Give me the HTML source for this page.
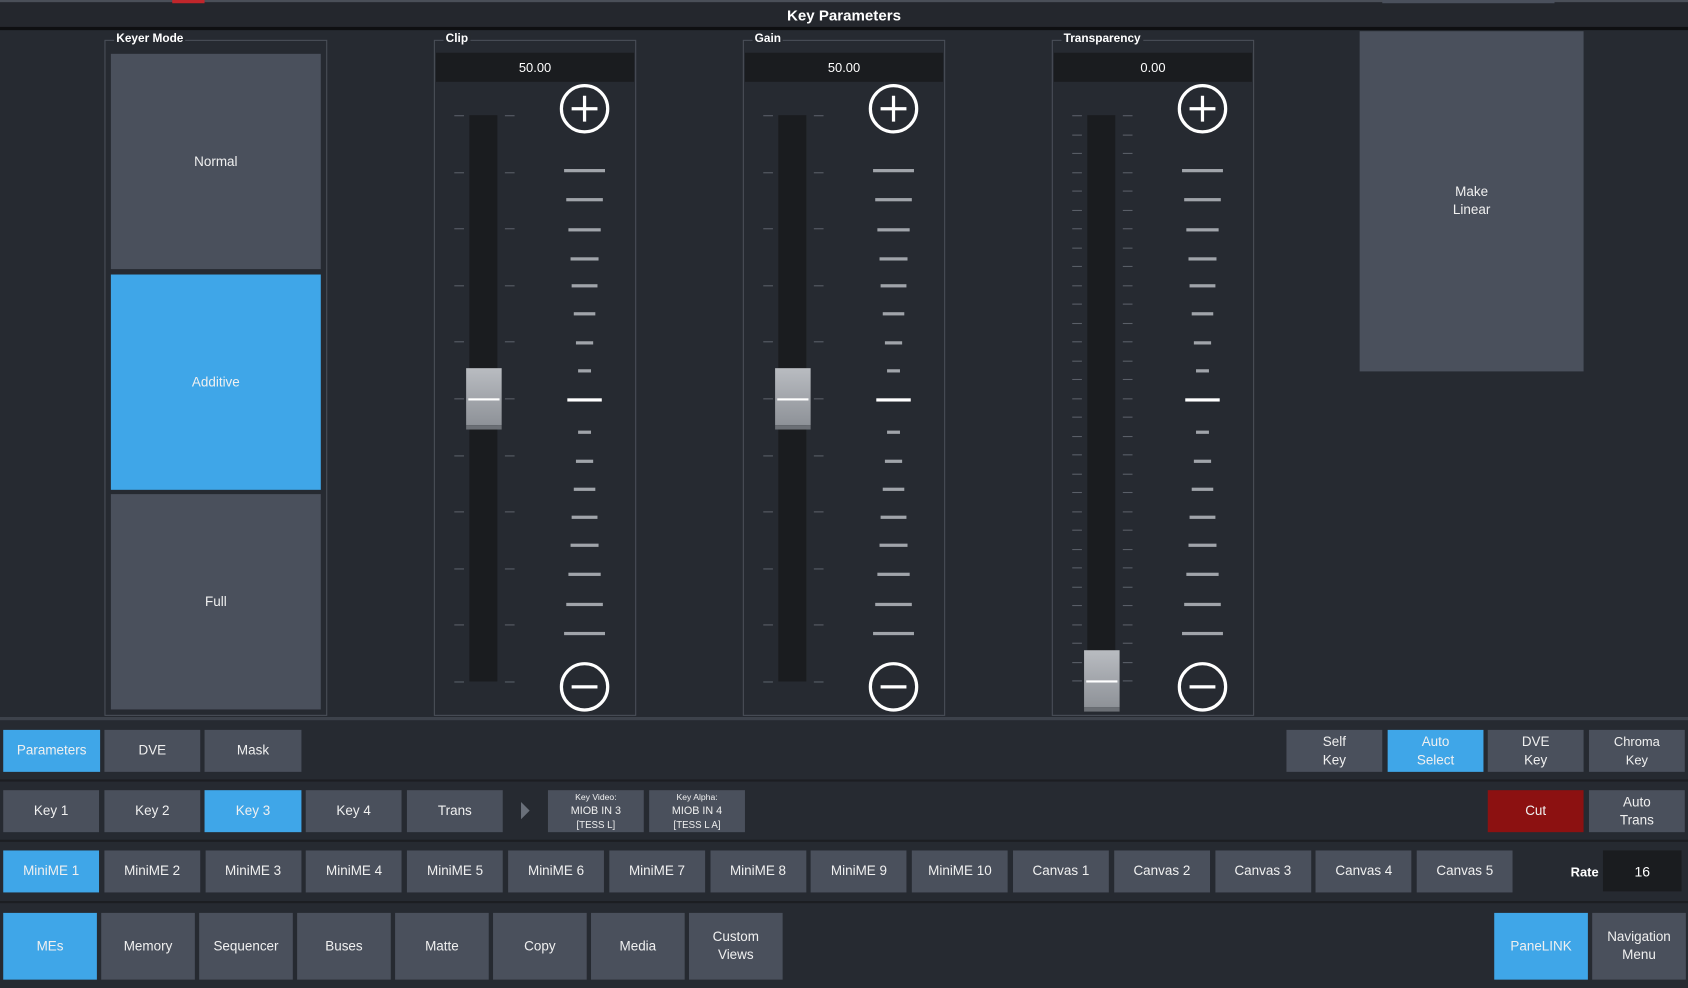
<!DOCTYPE html>
<html><head><meta charset="utf-8"><style>
*{margin:0;padding:0;box-sizing:border-box}
html,body{width:1688px;height:988px;overflow:hidden;background:#262a31}
#w{position:absolute;left:0;top:0;width:1568px;height:918px;transform:scale(1.07653);transform-origin:0 0;background:#262a31;font-family:"Liberation Sans",sans-serif;color:#fff}
.a{position:absolute}
.b{position:absolute;background:#4a505c;display:flex;align-items:center;justify-content:center;text-align:center;font-size:12.5px;line-height:17px;color:#f0f0f0}
.blue{background:#3fa6e8}
.red{background:#8c1111}
.grp{position:absolute;border:1px solid #4a4f58}
.lbl{position:absolute;font-size:11px;font-weight:bold;background:#262a31;padding:0 2px;top:-8px;left:8px}
.val{position:absolute;background:#1a1c1f;font-size:12px;display:flex;align-items:center;justify-content:center}
.sm{font-size:10px;line-height:14px}
</style></head><body><div id="w">
<div class="a" style="left:0;top:0;width:1568px;height:26px;background:#24272d;border-top:2px solid #4a4f58"></div>
<div class="a" style="left:160px;top:0;width:30px;height:3px;background:#c0262b"></div>
<div class="a" style="left:1284px;top:0;width:160px;height:3px;background:#4a505c"></div>
<div class="a" style="left:0;top:6px;width:1568px;text-align:center;font-size:14px;font-weight:bold">Key Parameters</div>
<div class="a" style="left:0;top:25px;width:1568px;height:3px;background:#0e0f11"></div>

<div class="grp" style="left:97px;top:37px;width:207px;height:628px"><span class="lbl">Keyer Mode</span></div>
<div class="b" style="left:103px;top:50px;width:195px;height:200px">Normal</div>
<div class="b blue" style="left:103px;top:255px;width:195px;height:200px">Additive</div>
<div class="b" style="left:103px;top:459px;width:195px;height:200px">Full</div>
<div class="b" style="left:1263px;top:29px;width:208px;height:316px">Make<br>Linear</div>
<div id="sl"></div>

<div class="a" style="left:0;top:666px;width:1568px;height:3px;background:#3d424b"></div>
<div class="a" style="left:0;top:724px;width:1568px;height:2px;background:#1c1e22"></div>
<div class="a" style="left:0;top:780px;width:1568px;height:2px;background:#1c1e22"></div>
<div class="a" style="left:0;top:837px;width:1568px;height:2px;background:#1c1e22"></div>

<div class="b blue" style="left:3px;top:678px;width:90px;height:39px">Parameters</div>
<div class="b" style="left:97px;top:678px;width:89px;height:39px">DVE</div>
<div class="b" style="left:190px;top:678px;width:90px;height:39px">Mask</div>
<div class="b" style="left:1195px;top:678px;width:89px;height:39px">Self<br>Key</div>
<div class="b blue" style="left:1289px;top:678px;width:89px;height:39px">Auto<br>Select</div>
<div class="b" style="left:1382px;top:678px;width:89px;height:39px">DVE<br>Key</div>
<div class="b" style="left:1476px;top:678px;width:89px;height:39px;font-size:12px">Chroma<br>Key</div>

<div class="b" style="left:3px;top:734px;width:89px;height:39px">Key 1</div>
<div class="b" style="left:97px;top:734px;width:89px;height:39px">Key 2</div>
<div class="b blue" style="left:190px;top:734px;width:90px;height:39px">Key 3</div>
<div class="b" style="left:284px;top:734px;width:89px;height:39px">Key 4</div>
<div class="b" style="left:378px;top:734px;width:89px;height:39px">Trans</div>
<div class="a" style="left:484px;top:745px;width:0;height:0;border-left:8px solid #6a707a;border-top:8px solid transparent;border-bottom:8px solid transparent"></div>
<div class="b sm" style="left:509px;top:734px;width:89px;height:39px;line-height:13px"><span><span style="font-size:8px">Key Video:</span><br>MIOB IN 3<br><span style="font-size:9px">[TESS L]</span></span></div>
<div class="b sm" style="left:603px;top:734px;width:89px;height:39px;line-height:13px"><span><span style="font-size:8px">Key Alpha:</span><br>MIOB IN 4<br><span style="font-size:9px">[TESS L A]</span></span></div>
<div class="b red" style="left:1382px;top:734px;width:89px;height:39px">Cut</div>
<div class="b" style="left:1476px;top:734px;width:89px;height:39px">Auto<br>Trans</div>
<div id="r3"></div>
<div class="a" style="left:1459px;top:803px;font-size:12px;font-weight:bold">Rate</div>
<div class="val" style="left:1489px;top:790px;width:73px;height:38px;font-size:13px">16</div>
<div id="r4"></div>
<div class="b blue" style="left:1388px;top:848px;width:87px;height:62px">PaneLINK</div>
<div class="b" style="left:1479px;top:848px;width:87px;height:62px">Navigation<br>Menu</div>
</div>
<script>
var h='';
var cols=[[403,'Clip','50.00',342],[690,'Gain','50.00',342],[977,'Transparency','0.00',604]];
var ys=[158,185,213,240,265,291,318,344,371,401,428,454,480,506,533,561,588];
var ws=[38,34,30,26,24,20,16,12,32,12,16,20,24,26,30,34,38];
cols.forEach(function(c,i){
 var x=c[0];
 h+='<div class="grp" style="left:'+x+'px;top:37px;width:188px;height:628px"><span class="lbl">'+c[1]+'</span></div>';
 h+='<div class="val" style="left:'+(x+2)+'px;top:49px;width:184px;height:27px">'+c[2]+'</div>';
 h+='<div class="a" style="left:'+(x+33)+'px;top:107px;width:26px;height:526px;background:#1a1c1f"></div>';
 var step=i==2?17.5:52.6;
 for(var y=107;y<=634;y+=step){h+='<div class="a" style="left:'+(x+19)+'px;top:'+Math.round(y)+'px;width:9px;height:1px;background:#5a5f68"></div><div class="a" style="left:'+(x+66)+'px;top:'+Math.round(y)+'px;width:9px;height:1px;background:#5a5f68"></div>';}
 h+='<div class="a" style="left:'+(x+30)+'px;top:'+c[3]+'px;width:33px;height:57px;background:linear-gradient(#b9bcc1,#8e9298);border-bottom:4px solid #6b6f75"></div><div class="a" style="left:'+(x+32)+'px;top:'+(c[3]+28)+'px;width:29px;height:2px;background:#fff"></div>';
 var cx=x+140;
 ['+','-'].forEach(function(s,k){var cy=k?638:101;
  h+='<svg class="a" style="left:'+(cx-25)+'px;top:'+(cy-25)+'px" width="50" height="50"><circle cx="25" cy="25" r="21.5" fill="none" stroke="#fff" stroke-width="3"/><line x1="13" y1="25" x2="37" y2="25" stroke="#fff" stroke-width="3"/>'+(s=='+'?'<line x1="25" y1="13" x2="25" y2="37" stroke="#fff" stroke-width="3"/>':'')+'</svg>';});
 ys.forEach(function(y,k){h+='<div class="a" style="left:'+(cx-ws[k]/2)+'px;top:'+(y-1)+'px;width:'+ws[k]+'px;height:3px;background:'+(k==8?'#fff':'#a0a4aa')+'"></div>';});
});
document.getElementById('sl').outerHTML=h;
var n=['MiniME 1','MiniME 2','MiniME 3','MiniME 4','MiniME 5','MiniME 6','MiniME 7','MiniME 8','MiniME 9','MiniME 10','Canvas 1','Canvas 2','Canvas 3','Canvas 4','Canvas 5'];
h='';n.forEach(function(t,i){h+='<div class="b'+(i==0?' blue':'')+'" style="left:'+(3+i*93.8)+'px;top:790px;width:89px;height:39px">'+t+'</div>';});
document.getElementById('r3').outerHTML=h;
n=['MEs','Memory','Sequencer','Buses','Matte','Copy','Media','Custom<br>Views'];
h='';n.forEach(function(t,i){h+='<div class="b'+(i==0?' blue':'')+'" style="left:'+(3+i*91)+'px;top:848px;width:87px;height:62px">'+t+'</div>';});
document.getElementById('r4').outerHTML=h;
</script>
</body></html>
